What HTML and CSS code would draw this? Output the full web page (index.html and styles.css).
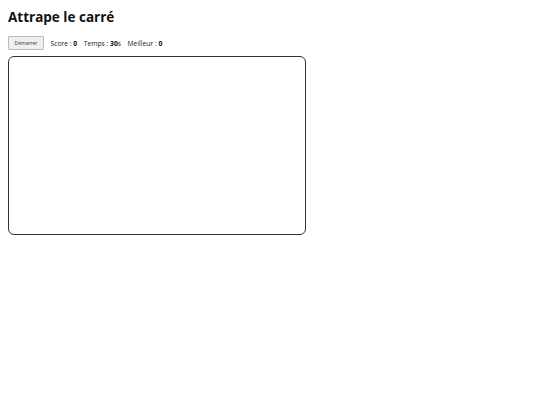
FILE: index.html
```html
<!DOCTYPE html>
<html lang="fr">
<head>
<meta charset="utf-8">
<title>Attrape le carré</title>
<link rel="stylesheet" href="styles.css">
</head>
<body>
<h1 class="title">Attrape le carré</h1>
<div class="bar">
  <button class="btn">Démarrer</button>
  <span class="stat">Score : <b>0</b></span>
  <span class="stat">Temps : <b>30</b>s</span>
  <span class="stat">Meilleur : <b>0</b></span>
</div>
<div class="board"></div>
</body>
</html>
```
FILE: styles.css
```css
body {
  margin: 8px;
  font-family: "Open Sans", sans-serif;
  color: #111;
}
.title {
  font-size: 13.5px;
  font-weight: 700;
  margin: 0;
  line-height: 18px;
}
.bar {
  display: flex;
  align-items: center;
  gap: 6.5px;
  margin-top: 10px;
  font-size: 6.75px;
  color: #222;
}
.btn {
  font-family: "Open Sans", sans-serif;
  font-size: 5px;
  height: 14px;
  width: 36px;
  padding: 0;
  background: #efefef;
  border: 1px solid #bbb;
  border-radius: 1px;
  color: #333;
}
.stat b { font-weight: 700; color: #111; }
.board {
  margin-top: 6px;
  width: 296px;
  height: 177px;
  border: 1px solid #333;
  border-radius: 6px;
}
```
